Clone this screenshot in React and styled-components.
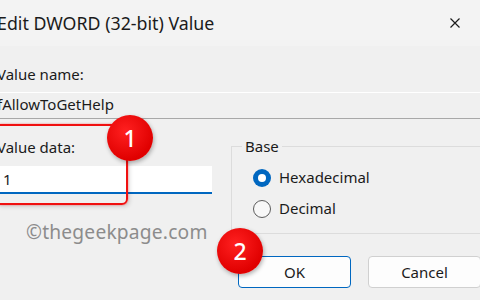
import styled, { createGlobalStyle } from "styled-components"

const Global = createGlobalStyle`
    body {
        margin: 0;
        background: #f0f0f0;
        font-family: "Noto Sans", "Liberation Sans", sans-serif;
        color: #1b1b1b;
    }
`

export default function App() {
    return (
        <Window>
            <Global />
            <TitleBar>
                <Title>Edit DWORD (32-bit) Value</Title>
                <Close viewBox="0 0 10 10">
                    <path d="M0.5 0.5 L9.5 9.5 M9.5 0.5 L0.5 9.5" stroke="#1b1b1b" strokeWidth="1.2" fill="none" />
                </Close>
            </TitleBar>

            <Body>
                <Label>Value name:</Label>
                <NameField>fAllowToGetHelp</NameField>

                <Columns>
                    <LeftCol>
                        <Label>Value data:</Label>
                        <DataField>1</DataField>
                        <Watermark>©thegeekpage.com</Watermark>
                    </LeftCol>

                    <RightCol>
                        <Group>
                            <Legend>Base</Legend>
                            <RadioRow>
                                <Radio checked />
                                Hexadecimal
                            </RadioRow>
                            <RadioRow>
                                <Radio />
                                Decimal
                            </RadioRow>
                        </Group>
                        <Buttons>
                            <Button primary>OK</Button>
                            <Button>Cancel</Button>
                        </Buttons>
                    </RightCol>
                </Columns>
            </Body>

            <Highlight />
            <Badge style={{ left: 107, top: 115 }}>1</Badge>
            <Badge style={{ left: 217, top: 228 }}>2</Badge>
        </Window>
    )
}

const Window = styled.div`
    position: relative;
    width: 480px;
    height: 300px;
    overflow: hidden;
    display: flex;
    flex-direction: column;
    background: #f0f0f0;
`

const TitleBar = styled.div`
    height: 46px;
    flex-shrink: 0;
    background: #f3f3f3;
    display: flex;
    align-items: center;
    justify-content: space-between;
    padding-right: 20px;
`

const Title = styled.div`
    margin-left: -3px;
    font-size: 17.8px;
`

const Close = styled.svg`
    width: 10px;
    height: 10px;
`

const Body = styled.div`
    padding-top: 18px;
    display: flex;
    flex-direction: column;
`

const Label = styled.div`
    margin-left: -3px;
    font-size: 15px;
    line-height: 20px;
`

const NameField = styled.div`
    margin-top: 8px;
    margin-right: -10px;
    height: 25px;
    border-top: 1px solid #ffffff;
    border-bottom: 1px solid #a8a8a8;
    margin-left: -3px;
    font-size: 15px;
    line-height: 22px;
`

const Columns = styled.div`
    display: grid;
    grid-template-columns: 212px 1fr;
    column-gap: 19px;
    margin-top: 18px;
`

const LeftCol = styled.div`
    display: flex;
    flex-direction: column;
`

const DataField = styled.div`
    margin-top: 9px;
    height: 26px;
    background: #ffffff;
    border-bottom: 2px solid #0067c0;
    padding-left: 3px;
    font-size: 15px;
    line-height: 26px;
`

const Watermark = styled.div`
    margin-top: 24px;
    margin-left: 26px;
    font-size: 19.2px;
    color: #8c8c8c;
    letter-spacing: 0.2px;
`

const RightCol = styled.div`
    display: flex;
    flex-direction: column;
    margin-right: -20px;
`

const Group = styled.fieldset`
    margin: 0;
    padding: 13px 0 8px 21px;
    height: 97px;
    box-sizing: border-box;
    border: 1px solid #dcdcdc;
    border-right: none;
    display: flex;
    flex-direction: column;
    gap: 12px;
`

const Legend = styled.legend`
    margin-left: -11px;
    padding: 0 3px;
    font-size: 15px;
    line-height: 18px;
`

const RadioRow = styled.div`
    display: flex;
    align-items: center;
    gap: 8px;
    font-size: 15px;
    line-height: 19px;
`

const Radio = styled.span`
    width: 18px;
    height: 18px;
    box-sizing: border-box;
    border-radius: 50%;
    display: flex;
    align-items: center;
    justify-content: center;
    background: ${props => props.checked ? "#0067c0" : "#f8f8f8"};
    border: ${props => props.checked ? "none" : "1.5px solid #5c5c5c"};

    &::after {
        content: "";
        display: ${props => props.checked ? "block" : "none"};
        width: 8px;
        height: 8px;
        border-radius: 50%;
        background: #ffffff;
    }
`

const Buttons = styled.div`
    display: flex;
    gap: 17px;
    margin-top: 22px;
    margin-left: 7px;
`

const Button = styled.div`
    width: 113px;
    height: 32px;
    box-sizing: border-box;
    flex-shrink: 0;
    background: #fdfdfd;
    border: 1px solid ${props => props.primary ? "#0067c0" : "#d0d0d0"};
    border-radius: 4px;
    display: flex;
    align-items: center;
    justify-content: center;
    font-size: 15px;
`

const Highlight = styled.div`
    position: absolute;
    left: -5px;
    top: 124px;
    width: 133px;
    height: 81px;
    box-sizing: border-box;
    border: 2px solid #f01010;
    border-radius: 6px;
    box-shadow: 0 0 2px rgba(255, 0, 0, 0.5), 2px 2px 4px rgba(0, 0, 0, 0.12);
`

const Badge = styled.div`
    position: absolute;
    width: 46px;
    height: 46px;
    border-radius: 50%;
    background: radial-gradient(circle at 40% 35%, #ff2020, #e00000 70%);
    box-shadow: 1px 2px 4px rgba(0, 0, 0, 0.3);
    color: #ffffff;
    font-size: 23px;
    font-weight: 500;
    display: flex;
    align-items: center;
    justify-content: center;
`
